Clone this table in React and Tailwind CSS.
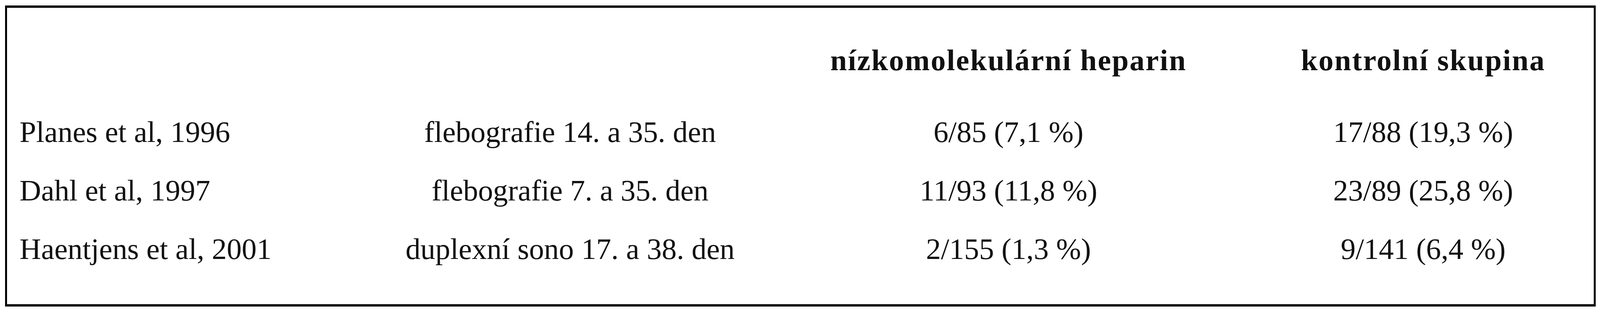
import React from "react";

const rows = [
  ["Planes et al, 1996", "flebografie 14. a 35. den", "6/85 (7,1 %)", "17/88 (19,3 %)"],
  ["Dahl et al, 1997", "flebografie 7. a 35. den", "11/93 (11,8 %)", "23/89 (25,8 %)"],
  ["Haentjens et al, 2001", "duplexní sono 17. a 38. den", "2/155 (1,3 %)", "9/141 (6,4 %)"],
];

const cols = "grid grid-cols-[1446fr_1574fr_1982fr_1382fr] leading-[150px] whitespace-nowrap";

export default function App() {
  return (
    <div className="w-full h-[800px] bg-white pt-[14px] pl-[0.31vw] pr-[0.28vw]">
      <div
        className="h-[772px] border-y-[6px] border-x-[5px] border-black pl-[0.79vw] pt-[60px] text-[#111] text-[1.866vw]"
        style={{ fontFamily: '"Liberation Serif", "Times New Roman", serif' }}
      >
        <div className={cols}>
          <div />
          <div />
          <div className="text-center font-bold tracking-[0.062vw]">nízkomolekulární heparin</div>
          <div className="text-center font-bold tracking-[0.062vw]">kontrolní skupina</div>
        </div>
        <div className={`${cols} mt-[34px]`}>
          {rows.map((r) => (
            <React.Fragment key={r[0]}>
              <div>{r[0]}</div>
              <div className="text-center">{r[1]}</div>
              <div className="text-center">{r[2]}</div>
              <div className="text-center">{r[3]}</div>
            </React.Fragment>
          ))}
        </div>
      </div>
    </div>
  );
}
